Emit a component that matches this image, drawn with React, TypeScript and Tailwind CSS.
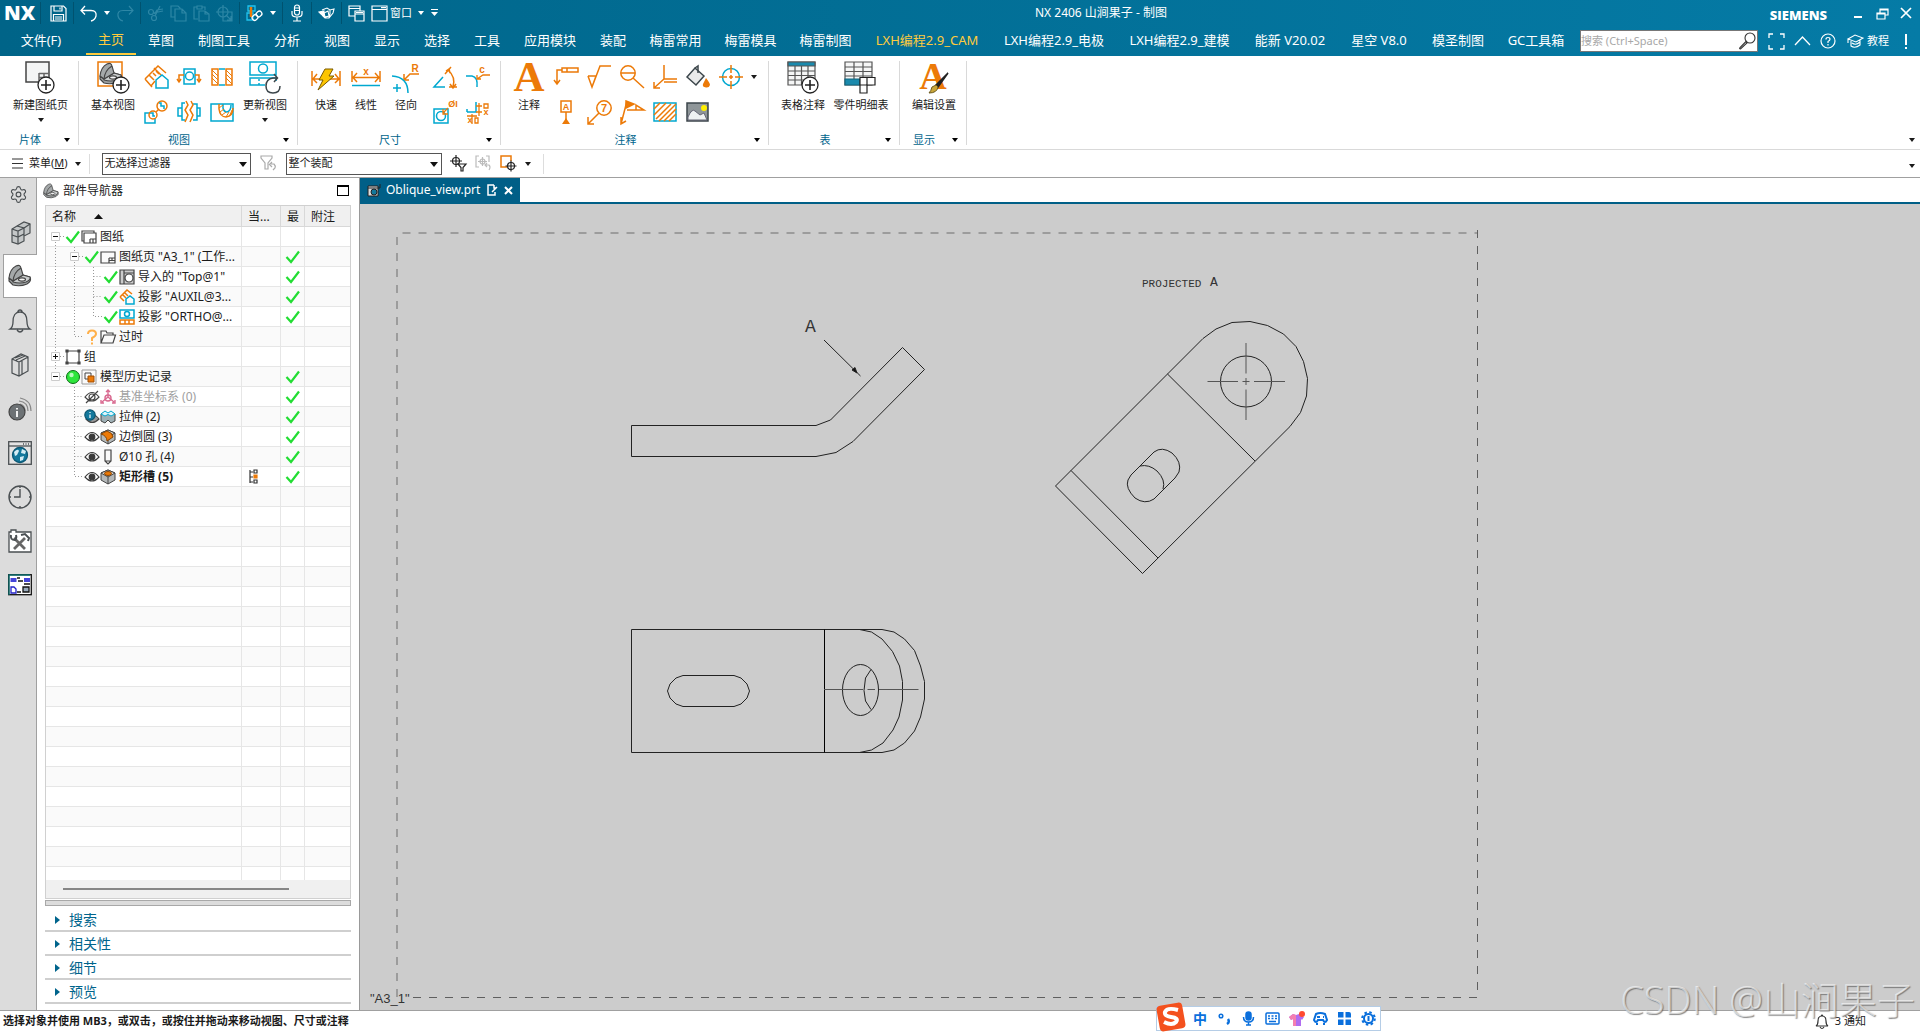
import React from "react";
import { Settings } from "lucide-react";

const O = "#ec7a08";
const B = "#00a8d0";
const K = "#3c464b";

type IconProps = { s?: number; w?: number; h?: number; c?: string; sw?: number; children: React.ReactNode };
function Icon({ s = 24, w, h, c = O, sw = 1.5, children }: IconProps) {
  const W = w ?? s;
  const H = h ?? s;
  return (
    <svg width={W} height={H} viewBox={`0 0 ${W} ${H}`} fill="none" stroke={c} strokeWidth={sw} className="block shrink-0 overflow-visible" aria-hidden="true">
      {children}
    </svg>
  );
}

function Letter({ x, y, size, c = O, font = "Liberation Sans", children }: { x: number; y: number; size: number; c?: string; font?: string; children: string }) {
  return (
    <text x={x} y={y} textAnchor="middle" fontFamily={font} fontWeight="bold" fontSize={size} fill={c} stroke="none">
      {children}
    </text>
  );
}

const Caret = ({ className = "" }: { className?: string }) => (
  <svg width="6" height="4" viewBox="0 0 6 4" className={"shrink-0 " + className} aria-hidden="true">
    <path d="M0 0H6L3 4Z" fill="currentColor" />
  </svg>
);

/* ---------- title bar ---------- */

const Sep = () => <span className="mx-[6px] h-[22px] w-px shrink-0 bg-[#00526f]" />;

function TitleBar() {
  return (
    <div className="relative flex h-[26px] items-center pr-2 pl-1 text-white">
      <span className="w-[36px] font-['Open_Sans'] text-[20px] leading-5 font-extrabold">NX</span>
      <span className="mr-[9px] h-[22px] w-px bg-[#00526f]" />
      <button aria-label="保存">
        <Icon s={17} c="#fff" sw={1.2}>
          <path d="M1 1H13.500L16 3.500V16H1ZM4 1V6H12V1M3.500 16V9.500H13.500V16M5 12H12M5 14H12M10 2.500V4.500" />
        </Icon>
      </button>
      <Sep />
      <button aria-label="撤销">
        <Icon s={17} c="#fff" sw={1.3}>
          <path d="M5 1L1 5.500L5 9.500M1 5.500H11C15.500 5.500 16.500 8 16 11Q15 15 11 16" />
        </Icon>
      </button>
      <Caret className="mx-[7px]" />
      <button aria-label="重做">
        <Icon s={17} c="#2d87a6" sw={1.2}>
          <path d="M12 1L16 5.500L12 9.500M16 5.500H6C1.500 5.500 .5 8 1 11Q2 15 6 16" />
        </Icon>
      </button>
      <Sep />
      <div className="flex gap-[6px]">
        <button aria-label="剪切">
          <Icon s={17} c="#2d87a6" sw={1.2}>
            <circle cx="4" cy="7" r="2.5" /><circle cx="7" cy="13" r="2.500" /><path d="M6 8L16 6M8 11L13 1M7.500 9L10 5L16 4" />
          </Icon>
        </button>
        <button aria-label="复制">
          <Icon s={17} c="#2d87a6" sw={1.2}>
            <path d="M5 12H1V1H8L10 3V4M5 4H12L16 8V16H5ZM12 4V8H16" />
          </Icon>
        </button>
        <button aria-label="粘贴">
          <Icon s={17} c="#2d87a6" sw={1.2}>
            <path d="M5 14H1V2H4M9 2H12V5M4 1H9V4H4ZM6 6H12L16 9V16H6ZM12 6V9H16" />
          </Icon>
        </button>
        <button aria-label="移动">
          <Icon s={17} c="#2d87a6" sw={1.2}>
            <circle cx="7" cy="7" r="5" /><path d="M7 0V10M0 7H10M7 7H16V16H7ZM10 10L15 15M15 11V15H11" />
          </Icon>
        </button>
      </div>
      <Sep />
      <button aria-label="装配约束">
        <Icon s={17} c="#20c4ee" sw={1.3}>
          <path d="M2 1H9V6H2ZM1 8H7V15H1Z" /><path d="M5 2V12" stroke={O} strokeWidth="2.500" />
          <rect x="6" y="10" width="6" height="5" rx="2.500" transform="rotate(-40 9 12.500)" stroke="#fff" />
          <rect x="10" y="6.500" width="6" height="5" rx="2.500" transform="rotate(-40 13 9)" stroke="#fff" />
        </Icon>
      </button>
      <Caret className="ml-[7px]" />
      <Sep />
      <button aria-label="语音" className="px-[1px]">
        <Icon w={14} h={18} c="#fff" sw={1.2}>
          <rect x="4.500" y="1" width="5" height="10" rx="2.500" /><path d="M5 4H9M5 6.500H9M2 7V10Q2 13 7 13Q12 13 12 10V7M7 13V17M3 17H11" />
        </Icon>
      </button>
      <Sep />
      <button aria-label="触控">
        <Icon s={17} c="#fff" sw={1.1}>
          <path d="M4 5L9 3L12 5L16 4L15 8L11 13L7 13L4 10M6 8L10 6L11 11L7 12ZM12 5V9L11 13" /><path d="M1 7L6 6L6 11L3 9Z" fill="#fff" />
        </Icon>
      </button>
      <Sep />
      <button aria-label="切换窗口" className="mr-[6px]">
        <Icon s={17} c="#fff" sw={1.2}>
          <path d="M7 11H1V1H12V6M1 3.500H12M7 6H16V16H7ZM7 9H16M8 7.500H15" />
        </Icon>
      </button>
      <button className="flex items-center gap-[2px] text-[11px]">
        <Icon s={17} c="#fff" sw={1.2}>
          <path d="M1 1H16V16H1ZM1 4.500H16M10 2.700H15" />
        </Icon>
        窗口
      </button>
      <Caret className="ml-[6px]" />
      <svg width="7" height="8" viewBox="0 0 7 8" className="ml-[7px]" aria-hidden="true"><path d="M0 0H7V1H0ZM0 3H7L3.500 7Z" fill="#fff" /></svg>
      <h1 className="absolute left-[1035px] text-[12px] whitespace-nowrap">NX 2406 山涧果子 - 制图</h1>
      <div className="ml-auto flex items-center">
        <span className="mr-[26px] pt-[3px] font-['Open_Sans'] text-[13px] leading-4 font-extrabold">SIEMENS</span>
        <button aria-label="最小化" className="mr-[13px]"><Icon s={10} c="#fff" sw={2}><path d="M1 9H9" /></Icon></button>
        <button aria-label="还原" className="mr-[11px]"><Icon s={13} c="#fff" sw={1.2}><path d="M1 6H9V12H1ZM1 7H9M4 6V2H12V8H9M4 3H12" /></Icon></button>
        <button aria-label="关闭"><Icon s={12} c="#fff" sw={1.700}><path d="M1 1L11 11M11 1L1 11" /></Icon></button>
      </div>
    </div>
  );
}

const TABS: { t: string; hi?: boolean; w: string }[] = [
  { t: "草图", w: "w-[50px]" }, { t: "制图工具", w: "w-[76px]" }, { t: "分析", w: "w-[50px]" }, { t: "视图", w: "w-[50px]" },
  { t: "显示", w: "w-[50px]" }, { t: "选择", w: "w-[50px]" }, { t: "工具", w: "w-[50px]" }, { t: "应用模块", w: "w-[76px]" },
  { t: "装配", w: "w-[50px]" }, { t: "梅雷常用", w: "w-[75px]" }, { t: "梅雷模具", w: "w-[75px]" }, { t: "梅雷制图", w: "w-[75px]" },
  { t: "LXH编程2.9_CAM", hi: true, w: "w-[128px]" }, { t: "LXH编程2.9_电极", w: "w-[126px]" }, { t: "LXH编程2.9_建模", w: "w-[125px]" },
  { t: "能新 V20.02", w: "w-[96px]" }, { t: "星空 V8.0", w: "w-[82px]" }, { t: "模圣制图", w: "w-[76px]" }, { t: "GC工具箱", w: "w-[80px]" },
];

function TabBar() {
  return (
    <div className="flex h-[30px] items-center text-[13px] text-white">
      <button className="w-[86px] pr-1 text-center">文件(F)</button>
      <button className="h-[28px] w-[50px] border-b-2 border-[#ffcb3d] text-[#ffcb3d]">主页</button>
      {TABS.map((x) => (
        <button key={x.t} className={`${x.w} shrink-0 text-center whitespace-nowrap ${x.hi ? "text-[#ffcb3d]" : ""}`}>{x.t}</button>
      ))}
      <label className="ml-1 flex h-[22px] w-[178px] shrink-0 items-center border border-[#777] bg-white text-[#333]">
        <input aria-label="搜索" placeholder="搜索 (Ctrl+Space)" className="w-[157px] bg-transparent text-[11px] outline-none placeholder:text-[#a8a8a8]" />
        <Icon w={18} h={18} c="#333" sw={1.1}><circle cx="12" cy="6" r="5" /><path d="M8.500 9L7.500 10M8 9.500L2 15.500Q1 17 2.500 17L9 11Z" /></Icon>
      </label>
      <div className="ml-auto flex items-center pr-[11px]">
        <button aria-label="全屏"><Icon s={17} c="#fff" sw={1.300}><path d="M1 5V1H5M12 1H16V5M16 12V16H12M5 16H1V12" /></Icon></button>
        <button aria-label="折叠" className="ml-[9px]"><Icon w={17} h={12} c="#fff" sw={1.300}><path d="M1 10L8.500 2L16 10" /></Icon></button>
        <button aria-label="帮助" className="ml-[9px]"><Icon s={16} c="#fff" sw={1.2}><circle cx="8" cy="8" r="7" /><path d="M6 6.500Q6 4.500 8 4.500Q10 4.500 10 6.300Q10 7.500 8 8.500V10M8 11V12.500" /></Icon></button>
        <button className="ml-[11px] flex items-center gap-[3px] text-[11px] whitespace-nowrap">
          <Icon w={17} h={14} c="#fff" sw={1.1}><path d="M1 5L8 1L16 4L9 8ZM4 7V12Q8 15 13 11V6M5 9Q9 12 13 8M1 5V9" /></Icon>
          教程
        </button>
        <button aria-label="提示" className="ml-[14px]"><Icon w={6} h={17} c="#fff" sw={2}><path d="M3 1V12M3 14V16" /></Icon></button>
      </div>
    </div>
  );
}

/* ---------- ribbon ---------- */

function Big({ label, w, menu, children }: { label: string; w: string; menu?: boolean; children: React.ReactNode }) {
  return (
    <button className={`flex ${w} flex-col items-center text-[11px] leading-4 whitespace-nowrap`}>
      {children}
      <span className="mt-[3px]">{label}</span>
      {menu && <Caret className="mt-[5px]" />}
    </button>
  );
}

function Group({ label, w, children }: { label: string; w: string; children: React.ReactNode }) {
  return (
    <section className={`flex h-[84px] ${w} shrink-0 flex-col justify-between border-r border-[#d9d9d9]`}>
      <div className="flex items-start">{children}</div>
      <div className="flex h-[10px] items-center text-[11px] text-[#00648c]">
        <span className="flex-1 text-center">{label}</span>
        <Caret className="mr-2 ml-1 text-black" />
      </div>
    </section>
  );
}

const Grid = ({ className, children }: { className: string; children: React.ReactNode }) => (
  <div className={`mt-1 grid grid-flow-col grid-rows-2 gap-x-[9px] gap-y-[11px] ${className}`}>
    {React.Children.map(children, (c) => <button aria-label="命令">{c}</button>)}
  </div>
);

const Plus = ({ x, y }: { x: number; y: number }) => (
  <g stroke="#222" strokeWidth="1.300"><circle cx={x} cy={y} r="8" fill="#fff" /><path d={`M${x - 5} ${y}H${x + 5}M${x} ${y - 5}V${y + 5}`} strokeWidth="1.600" /></g>
);

const Bracket = () => (
  <g stroke="#444" strokeWidth="1.100" strokeLinejoin="round">
    <path d="M1 14L5 17L15 11L22 13Q24 17 19 20Q12 23 5 21L1 17Z" fill="#9b9fa0" />
    <path d="M5 17L15 11L22 13Q23 16 18 18Q12 20 5 18Z" fill="#c9cccc" />
    <path d="M1 14Q2 5 8 2Q12 0 13 4L15 11L5 17Z" fill="#a4a8a9" />
    <path d="M5 17Q6 8 13 4" fill="none" />
    <ellipse cx="14" cy="15.500" rx="3.500" ry="1.600" fill="#f4f4f4" />
  </g>
);

function Ribbon() {
  return (
    <div className="flex h-[94px] border-b border-[#d9d9d9] pt-[5px]">
      <Group label="片体" w="w-[79px]">
        <Big label="新建图纸页" w="ml-[3px] w-[76px]" menu>
          <Icon w={34} h={33} c={K}>
            <rect x="2" y="1" width="23" height="20" fill="#f4f5f5" stroke="#444" />
            <path d="M15 12.500H25M15 16.500H25M15 12V21M20 12V16" stroke="#666" />
            <Plus x={22} y={24} />
          </Icon>
        </Big>
      </Group>
      <Group label="视图" w="w-[219px]">
        <Big label="基本视图" w="ml-3 w-[44px]">
          <Icon w={32} h={33}>
            <rect x="1" y="1" width="24" height="24" fill="#fff" /><g transform="translate(2 1)"><Bracket /></g><Plus x={24} y={24} />
          </Icon>
        </Big>
        <Grid className="ml-[9px]">
          <Icon><path d="M1 14L14 1L22 8M1 14L8 22M5 10L10 15M9 8L12 11M12 6L15 9M10 3L17 10M7 21L11 16" /><path d="M12 15L18 10L24 15V23H12Z" stroke={B} /></Icon>
          <Icon c={B}><path d="M11 18V23H1V13H7" /><circle cx="18" cy="6" r="5" stroke={O} /><path d="M15 3H17V6H20V9" /><circle cx="9" cy="15" r="4" stroke={O} /><path d="M7 13H9V16H11" /><path d="M12 12L15 9" stroke={O} /></Icon>
          <Icon c={B}><path d="M7 4H18V19H7Z" /><circle cx="12.500" cy="11" r="4" /><path d="M7 10H2V16M18 10H22V16" stroke={O} /><path d="M0 14L2 17L4 14M20 14L22 17L24 14" stroke={O} /></Icon>
          <Icon c={B}><path d="M8 3H5V20H8M5 8H1V16H5M16 4H20V20H16M20 8H23V16H20" /><path d="M9 1L11 5L8 10L11 15L8 22M14 1L16 5L13 10L16 15L13 22" stroke={O} /></Icon>
          <Icon><path d="M2 4H8V20H2ZM16 4H22V20H16Z" /><path d="M2 5L8 11M2 9L8 15M2 13L8 19M16 5L22 11M16 9L22 15M16 13L22 19" strokeWidth="1" /><path d="M9 4H15M9 20H15" stroke={B} /></Icon>
          <Icon c={B}><path d="M1 4H23V21H1Z" /><path d="M9 4V9Q10 17 16 17Q23 16 23 8" stroke={O} /><path d="M13 4V8Q14 12 17 12Q21 11 21 5" /><path d="M9 8L13 5M10 12L14 9M12 15L16 12M16 17L19 12M20 15L22 10" stroke={O} strokeWidth="1" /></Icon>
        </Grid>
        <Big label="更新视图" w="ml-[9px] w-[44px]" menu>
          <Icon w={32} h={33} c={B}>
            <rect x="1" y="1" width="26" height="13" /><circle cx="14" cy="7.500" r="4.500" /><path d="M16 24H1V17H27V20" /><path d="M10 18V24" strokeDasharray="2 2" />
            <path d="M28 17H24Q17 18 17 25Q17 32 24 32Q31 32 31 25M25 13L28.500 17L25 21" stroke={K} />
          </Icon>
        </Big>
      </Group>
      <Group label="尺寸" w="w-[203px]">
        <Big label="快速" w="ml-2 w-[40px]">
          <Icon w={30} h={33}>
            <path d="M1 10V25M29 10V25M2 18H28M6 13L2 18L6 22M24 13L28 18L24 22" />
            <path d="M14 8H22L18 15H23L7 29L12 19H8Z" fill="#fdc500" stroke="#7a5a00" strokeWidth="1" />
          </Icon>
        </Big>
        <Big label="线性" w="w-[40px]">
          <Icon w={30} h={33}>
            <path d="M1 10V21M29 10V21M2 16.500H28M6 12L2 16.500L6 21M24 12L28 16.500L24 21" /><Letter x={15} y={14} size={10}>x</Letter><path d="M1 24.500H29" stroke={B} />
          </Icon>
        </Big>
        <Big label="径向" w="w-[40px]">
          <Icon w={30} h={33}>
            <Letter x={24} y={11} size={10}>R</Letter><path d="M28 13H19L14 18M13 13V19H18" /><path d="M1 15Q17 16 17 32M2 27H10M6 23V31" stroke={B} />
          </Icon>
        </Big>
        <Grid className="ml-[7px]">
          <Icon><path d="M12 22H1L10 12" stroke={B} /><path d="M12 9L18 2M15 5Q23 12 20 22M13 6L16 4L17 8M17 19L20 23L23 19M16 22H24" /></Icon>
          <Icon c={B}><path d="M1 9H15V23H1Z" /><circle cx="8" cy="16" r="4.500" /><path d="M15 8L10 13M10 9V14H15" stroke={O} strokeWidth="1.300" /><Letter x={20} y={7} size={9}>ØI</Letter></Icon>
          <Icon c={B}><path d="M0 11H6Q12 12 11 22" /><path d="M24 10H17L11 14M11 10V14H15" stroke={O} strokeWidth="1.300" /><Letter x={16} y={8} size={10}>c</Letter></Icon>
          <Icon c={B}><path d="M1 12H10V2M1 12V9" /><path d="M10 6H16M10 12H16M13 3V16M6 14V24M1 16H11M18 4V8H22V4ZM9 18V23H12V18Z" stroke={O} strokeWidth="1.300" /><Letter x={20} y={15} size={9}>x</Letter><Letter x={4} y={23} size={9}>x</Letter></Icon>
        </Grid>
      </Group>
      <Group label="注释" w="w-[268px]">
        <Big label="注释" w="ml-2 w-[40px]">
          <Icon w={34} h={33}><Letter x={17} y={30} size={43} font="Liberation Serif">A</Letter></Icon>
        </Big>
        <Grid className="ml-[5px]">
          <Icon><path d="M24 3H8V7H24ZM13 3V7M8 5H3V19M0 15L3 19L6 15" /></Icon>
          <Icon><path d="M7 1H17V12H7ZM12 12V23" /><Letter x={12} y={10} size={9}>A</Letter><path d="M8 24L12 18L16 24Z" fill={O} stroke="none" /></Icon>
          <Icon><path d="M1 11H9L5 22L1 11M5 22L13 1H24" /></Icon>
          <Icon><circle cx="17" cy="8" r="7.200" /><Letter x={17} y={12} size={11}>7</Letter><path d="M12 13L1 24M1 17V24H7" /></Icon>
          <Icon><circle cx="8" cy="8" r="7.200" /><path d="M1 8H15M13 13L24 23" /></Icon>
          <Icon><path d="M1 24L7 1M7 10H24L16 5V10M1 17V24L6 21" /><path d="M6 1L14 4L6 8Z" fill={O} /></Icon>
          <Icon><path d="M11 0V14H24M11 14L1 23M1 17V23H7M11 17H24" /></Icon>
          <Icon c={B}><path d="M1 3H23V21H1Z" /><path d="M1 9L7 3M1 15L13 3M3 19L18 4M6 21L23 4M11 21L23 9M16 21L23 14" stroke={O} /></Icon>
          <Icon c={K}><path d="M1 12L9 3L18 11L10 20Z" fill="#e9eaea" /><path d="M9 3L12 1V8" /><path d="M20 13Q24 18 24 20Q23 23 20 22.500Q16 22 17 19Z" fill="#ec7a08" stroke="none" /></Icon>
          <Icon c={K}><path d="M1 3H22V21H1Z" fill="#8f9699" /><circle cx="18" cy="8" r="3" fill="#ffef00" stroke="none" /><path d="M2 17Q6 8 9 11L14 15L18 13L21 20H2Z" fill="#eef1f2" stroke="#667" strokeWidth="1" /></Icon>
          <Icon c={B}><circle cx="12" cy="12" r="8.500" /><path d="M12 0V8M12 10V14M12 16V24M0 12H8M10 12H14M16 12H24" stroke={O} /></Icon>
        </Grid>
        <span className="mt-[14px] ml-2"><Caret /></span>
      </Group>
      <Group label="表" w="w-[131px]">
        <Big label="表格注释" w="ml-3 w-[44px]">
          <Icon w={34} h={33} c="#555" sw={1.2}>
            <path d="M2 1H29V24H2Z" fill="#f5f6f6" /><path d="M2 1H29V5H2Z" fill="#1a8aad" /><path d="M2 10H29M2 14.500H29M2 19H29M9 5V24M15.500 5V24M22 5V24" /><Plus x={24} y={24} />
          </Icon>
        </Big>
        <Big label="零件明细表" w="ml-2 w-[56px]">
          <Icon w={34} h={33} c="#555" sw={1.2}>
            <path d="M1 1H28V24H1Z" fill="#f5f6f6" /><path d="M1 6H28M1 10.500H28M1 15H28M10 1V24M19 1V24" /><path d="M1 18H16V24H1Z" fill="#1a8aad" stroke="#15677f" /><path d="M16 16.500H31V24H23V32H16Z" fill="#fff" stroke="#222" /><path d="M23 16.500V24H16" stroke="#222" />
          </Icon>
        </Big>
      </Group>
      <Group label="显示" w="w-[67px]">
        <Big label="编辑设置" w="ml-3 w-[44px]">
          <Icon w={34} h={33}>
            <Letter x={16} y={28} size={38} font="Liberation Serif">A</Letter>
            <path d="M31 12L19 24L21 26Z" fill="#222" stroke="#222" /><path d="M19 24L21 26Q20 32 12 32Q14 30 15 26Z" fill="#c9a63a" stroke="#6b5a1e" strokeWidth="1" />
          </Icon>
        </Big>
      </Group>
      <span className="mt-[77px] mr-[5px] ml-auto"><Caret /></span>
    </div>
  );
}

function Combo({ value, w, label }: { value: string; w: string; label: string }) {
  return (
    <div className={`relative ${w}`}>
      <select aria-label={label} className="h-[22px] w-full appearance-none border border-[#555] bg-white pl-[2px] text-[11px] outline-none">
        <option>{value}</option>
      </select>
      <svg width="8" height="5" viewBox="0 0 8 5" className="pointer-events-none absolute top-[9px] right-1" aria-hidden="true"><path d="M0 0H8L4 5Z" fill="#111" /></svg>
    </div>
  );
}

function SelectionBar() {
  return (
    <div className="flex h-[28px] items-center border-b border-[#a0a0a0] pr-[5px] pl-3 text-[11px]">
      <button className="flex items-center">
        <Icon w={11} h={11} c="#333" sw={1.2}><path d="M0 1H11M0 5.500H11M0 10H11" /></Icon>
        <span className="ml-[6px]">菜单(<u>M</u>)</span>
        <Caret className="ml-[7px]" />
      </button>
      <span className="mr-3 ml-2 h-[20px] w-px bg-[#ddd]" />
      <Combo label="选择过滤器" value="无选择过滤器" w="w-[149px]" />
      <button aria-label="重置过滤器" className="mx-[9px]"><Icon s={17} c="#aaa" sw={1.2}><path d="M1 1H12V3L8 8V14H5V8L1 3ZM10 9H14Q16 11 15 13L13 15M12 7L9.500 9.500L12 12" /></Icon></button>
      <Combo label="选择范围" value="整个装配" w="w-[156px]" />
      <button aria-label="点过滤" className="ml-2"><Icon s={17} c="#222" sw={1.2}><circle cx="6" cy="6" r="3.500" /><path d="M6 0V12M0 6H12" /><path d="M8 9H16L13 12.500V16H11V12.500Z" fill="#fff" /></Icon></button>
      <button aria-label="范围选择" className="ml-2"><Icon s={17} c="#bbb" sw={1.2}><path d="M4 1H1V12H4M11 1H14V7" /><circle cx="7.500" cy="6.500" r="2.500" /><path d="M7.500 2V11M3 6.500H12M10 10H14Q16 12 14 15M12 8L10 10L12 12" /></Icon></button>
      <button aria-label="捕捉" className="ml-2"><Icon s={17} c={O} sw={1.500}><path d="M7 12H1V1H11V6" /><g stroke="#222" strokeWidth="1.200"><circle cx="11" cy="11" r="3.500" /><path d="M11 5.500V16.500M5.500 11H16.500" /></g></Icon></button>
      <Caret className="ml-2" />
      <span className="ml-3 h-[20px] w-px bg-[#ddd]" />
      <span className="mt-1 ml-auto"><Caret /></span>
    </div>
  );
}

/* ---------- resource bar ---------- */

const G = "#4a4f52";
const RAIL: { label: string; icon: React.ReactNode; on?: boolean }[] = [
  { label: "设置", icon: <Settings size={19} strokeWidth={1.4} color={G} /> },
  { label: "装配导航器", icon: <Icon s={24} c={G} sw={1.200}><path d="M9 5L16 1L22 3V12L16 15V20L10 23L4 21V8L9 5Z" fill="#c4c7c8" /><path d="M4 8L10 10L16 7L9 5M10 10V23M16 7L22 3M16 7V15M4 14L10 16L16 13" /></Icon> },
  { label: "部件导航器", on: true, icon: <Icon s={24} c={G}><Bracket /></Icon> },
  { label: "通知", icon: <Icon s={24} c={G} sw={1.300}><path d="M10 3Q10 1 12 1Q14 1 14 3M2 20Q5 18 5 13Q5 3 12 3Q19 3 19 13Q19 18 22 20ZM9 21Q12 25 15 21" /></Icon> },
  { label: "重用库", icon: <Icon s={24} c={G} sw={1.200}><path d="M4 6L13 1L20 4V18L11 23L4 20ZM4 6L11 9L20 4M11 9V23M7 5L15 2M8 7L17 3M14 8V21" /></Icon> },
  { label: "信息", icon: <Icon s={24} c="#888" sw={1.200}><path d="M11 4Q20 5 20 14M12 1Q23 3 23 14M12 7Q17 8 17 14" /><circle cx="9" cy="15" r="8" fill="#6d7275" stroke="#444" /><path d="M9 11V12.500M9 14V20" stroke="#fff" strokeWidth="1.800" /></Icon> },
  { label: "浏览器", icon: <Icon s={24} c={G} sw={1.300}><rect x=".7" y=".7" width="22.600" height="22.600" fill="#e4e4e4" /><path d="M1 5H23" /><path d="M15 3H21" strokeDasharray="1 1.500" /><circle cx="12" cy="14" r="7.500" fill="#13789c" stroke="#0c5875" /><path d="M6 11Q10 7 11 10L9 14L7 15ZM14 8L18 10L17 13L13 12ZM12 16L16 15L15 19L12 20Z" fill="#d5edf5" stroke="none" /></Icon> },
  { label: "历史", icon: <Icon s={24} c={G} sw={1.400}><circle cx="12" cy="12" r="11" /><path d="M12 4V12H6M12 1V3M12 21V23M1 12H3M21 12H23" /></Icon> },
  { label: "工具", icon: <Icon s={24} c={G} sw={1.300}><path d="M1 3H3V1H8V3H23V23H1Z" fill="#fff" /><path d="M6 9L17 20M17 9L6 20" strokeWidth="2.800" stroke="#666" /><path d="M3 6Q2 11 7 11Q9 9 8 6M13 6L17 5L21 9L20 12" strokeWidth="2" /></Icon> },
  { label: "流程", icon: <Icon w={24} h={22} c="#111" sw={1.300}><rect x=".7" y=".7" width="22.600" height="20" fill="#fff" /><path d="M1 21V1H22" stroke="#0c7070" /><path d="M2.500 4H8.500V8H2.500ZM16 4H22V8H16Z" fill="#4444d8" stroke="none" /><path d="M9 4H12M10 7H15M9 18H13M16 10H22" /><path d="M3 13H6L8 15V19H3Z" stroke="#2222c8" /><path d="M15 13H21V18H15Z" fill="#9ab" /></Icon> },
];

function Rail() {
  return (
    <nav className="flex w-[37px] shrink-0 flex-col border-r border-[#a0a0a0] bg-[#dcdcdc]">
      {RAIL.map((r, i) => (
        <button key={r.label} aria-label={r.label} className={`flex shrink-0 items-center justify-center ${i === 0 ? "h-[32px]" : "h-[44px]"} ${r.on ? "-mr-px ml-[3px] border-y border-l border-[#a0a0a0] bg-white pr-[2px]" : i === 0 ? "" : "pt-[2px] pl-[3px]"}`}>
          {r.icon}
        </button>
      ))}
    </nav>
  );
}

/* ---------- part navigator ---------- */

const Check = () => <Icon w={16} h={14} c="#22dd33" sw={2.200}><path d="M1.500 7L6 12L14 1.500" /></Icon>;
const Eye = () => <Icon w={16} h={14} c="#3a3a3a" sw={1.200}><path d="M1 7Q8 -2 15 7Q8 15 1 7Z" /><circle cx="8" cy="7" r="2.800" fill="#3a3a3a" /></Icon>;
const Cube = ({ top, children }: { top: string; children?: React.ReactNode }) => (
  <Icon s={16} c="#444" sw={1}><path d="M8 1L15 4V11L8 15L1 11V4Z" fill="#b4b8b9" /><path d="M8 1L15 4L8 8L1 4Z" fill={top} /><path d="M8 8V15" />{children}</Icon>
);

type Row = { lv: string; ex?: string; a?: React.ReactNode; b: React.ReactNode; t: string; ok?: boolean; cls?: string; cur?: boolean };
const ROWS: Row[] = [
  { lv: "pl-0", ex: "−", a: <Check />, b: <Icon s={16} c="#444" sw={1.200}><path d="M3 12H1V2H13V4M3 4H15V14H3ZM9 10H15M9 10V14M12 10V14" /></Icon>, t: "图纸" },
  { lv: "pl-[19px]", ex: "−", a: <Check />, b: <Icon s={16} c="#444" sw={1.200}><path d="M1 3H15V14H1ZM9 9H15M9 11.500H15M9 9V14M12 9V11" /></Icon>, t: '图纸页 "A3_1" (工作...', ok: true },
  { lv: "pl-[38px]", a: <Check />, b: <Icon s={16} c="#444" sw={1.200}><path d="M1 1H15V15H1Z" fill="#ccc" /><path d="M5 1V15M5 4H15" /><circle cx="10" cy="9" r="4" fill="#fff" /></Icon>, t: '导入的 "Top@1"', ok: true },
  { lv: "pl-[38px]", a: <Check />, b: <Icon s={16}><path d="M1 8L8 1L13 5M1 8L5 12M4 6L7 9M6 4L9 7" /><path d="M7 10L11 7L15 10V15H7Z" stroke={B} /></Icon>, t: '投影 "AUXIL@3...', ok: true },
  { lv: "pl-[38px]", a: <Check />, b: <Icon s={16} c={B}><path d="M1 1H15V9H1Z" /><circle cx="8" cy="5" r="2.500" /><path d="M1 11H15V15H1ZM6 11V15M10 11V15" stroke={O} /></Icon>, t: '投影 "ORTHO@...', ok: true },
  { lv: "pl-[19px]", a: <Icon s={16} c="#ffb04a" sw={2}><path d="M4 5Q4 1.500 8 1.500Q12 1.500 12 5Q12 7 8 9V12M8 13.500V15.500" /></Icon>, b: <Icon s={16} c="#444" sw={1.200}><path d="M1 14V2H6L7 4H13V6M1 14L4 6H15.500L13 14Z" /></Icon>, t: "过时" },
  { lv: "pl-0", ex: "+", b: <Icon s={16} c="#444" sw={1.200}><path d="M2 2H14V14H2Z" /><path d="M1 1H3V3H1ZM13 1H15V3H13ZM1 13H3V15H1ZM13 13H15V15H13Z" fill="#444" /></Icon>, t: "组" },
  { lv: "pl-0", ex: "−", a: <Icon s={16} c="#0c6b16" sw={1}><circle cx="8" cy="8" r="6.500" fill="#2ee53c" /><circle cx="6.500" cy="6" r="2.200" fill="#b9f8bd" stroke="none" /></Icon>, b: <Icon s={16} c="#999" sw={1}><path d="M1 1H15V15H1Z" /><path d="M4 4H10V10H4Z" stroke="#444" /><path d="M7 7H13V13H7Z" fill={O} stroke="#a04d00" /></Icon>, t: "模型历史记录", ok: true },
  { lv: "pl-[19px]", a: <Icon w={16} h={14} c="#444" sw={1.200}><path d="M1 7Q8 -2 15 7Q8 15 1 7ZM2 13L14 1" /><circle cx="8" cy="7" r="3" /></Icon>, b: <Icon s={16} c="#d96a90" sw={1.400}><path d="M8 8V1M6 3L8 1L10 3M8 8L2 13M8 8L14 13M1 11V14H4M12 14H15V11" /><circle cx="8" cy="9" r="3" /></Icon>, t: "基准坐标系 (0)", ok: true, cls: "text-[#a0a0a0]" },
  { lv: "pl-[19px]", a: <Icon s={16} c="#444" sw={1.200}><path d="M2 10Q9 2 15 10Q8 17 2 10Z" fill="#999" /><circle cx="6" cy="6" r="5.200" fill="#13789c" stroke="#0b5570" /><path d="M6 3V4M6 5.500V9" stroke="#fff" /></Icon>, b: <Icon s={16} c="#444" sw={1}><path d="M1 5L5 3L8 5L11 3L15 5V12L11 14L8 11L5 14L1 12Z" fill="#9fb0b5" /><path d="M1 5L5 2L8 4L11 2L15 5L11 7L8 5.500L5 7Z" stroke={B} fill="#dff4fa" /></Icon>, t: "拉伸 (2)", ok: true },
  { lv: "pl-[19px]", a: <Eye />, b: <Cube top="#ccc"><path d="M1 5L7 2Q13 4 13 8L7 12Q7 7 1 5Z" fill={O} stroke="#8a4500" /></Cube>, t: "边倒圆 (3)", ok: true },
  { lv: "pl-[19px]", a: <Eye />, b: <Icon s={16} c="#444" sw={1.200}><path d="M5 1H11V12L8 15L5 12ZM5 12H11" /></Icon>, t: "Ø10 孔 (4)", ok: true },
  { lv: "pl-[19px]", a: <Eye />, b: <Cube top="#e0e0e0"><ellipse cx="8" cy="4.500" rx="3.500" ry="2" fill={O} stroke="#8a4500" /></Cube>, t: "矩形槽 (5)", ok: true, cls: "font-bold", cur: true },
];

function Tree() {
  const cell = "h-[20px] border-r border-b border-[#e6e6e6] p-0";
  const head = "h-[21px] border-r border-b border-[#d8d8d8] bg-[#f0f0f0] p-0 text-left font-normal";
  return (
    <div className="relative min-h-0 flex-1 overflow-hidden">
      <table className="w-full table-fixed border-separate border-spacing-0 text-[12px] leading-[19px]">
        <colgroup><col /><col className="w-[39px]" /><col className="w-[24px]" /><col className="w-[45px]" /></colgroup>
        <thead>
          <tr>
            <th className={head}>
              <span className="flex items-center gap-[18px] pl-[6px]">名称<svg width="9" height="5" viewBox="0 0 9 5" aria-hidden="true"><path d="M0 5L4.500 0L9 5Z" fill="#111" /></svg></span>
            </th>
            <th className={`${head} pl-[6px]`}>当...</th>
            <th className={`${head} pl-[6px]`}>最</th>
            <th className={`${head} border-r-0 pl-[6px]`}>附注</th>
          </tr>
        </thead>
        <tbody>
          {Array.from({ length: 33 }, (_, i) => {
            const r = ROWS[i];
            return (
              <tr key={i} className={i % 2 ? "bg-[#fafafa]" : "bg-white"}>
                <td className={cell}>
                  {r && (
                    <div className={`relative z-10 flex h-[19px] items-center overflow-hidden whitespace-nowrap ${r.lv} ${r.cls ?? ""}`}>
                      <span className="flex w-[19px] shrink-0 justify-center">
                        {r.ex && (
                          <button aria-label="展开" className="bg-white">
                            <Icon s={9} c="#111" sw={1}><path d="M.5 .5H8.500V8.500H.5Z" stroke="#ccc" /><path d={r.ex === "+" ? "M2 4.500H7M4.500 2V7" : "M2 4.500H7"} /></Icon>
                          </button>
                        )}
                      </span>
                      {r.a}
                      <span className="mr-[3px]">{r.b}</span>
                      {r.t}
                    </div>
                  )}
                </td>
                <td className={cell}>
                  {r?.cur && <span className="block pl-[7px]"><Icon w={10} h={15} c="#333" sw={1.200}><path d="M1 1V14M1 3H4M1 8H4M1 13H4M5 1H8V4H5ZM5 11H8V14H5Z" /><path d="M5 6H8V9H5Z" fill={O} stroke={O} /></Icon></span>}
                </td>
                <td className={cell}>{r?.ok && <span className="flex justify-center"><Check /></span>}</td>
                <td className={`${cell} border-r-0`} />
              </tr>
            );
          })}
        </tbody>
      </table>
      <svg width="80" height="300" viewBox="0 0 80 300" className="pointer-events-none absolute top-0 left-0" fill="none" stroke="#999" strokeDasharray="1 2" aria-hidden="true">
        <path d="M9.500 36V146M9.500 156V165M14 30.500H18M14 150.500H18M14 170.500H18" />
        <path d="M28.500 41V46M28.500 56V130.500H37M33 50.500H37M47.500 61V110.500H56M47.500 70.500H56M47.500 90.500H56" />
        <path d="M28.500 181V270.500H37M28.500 190.500H37M28.500 210.500H37M28.500 230.500H37M28.500 250.500H37" />
      </svg>
    </div>
  );
}

function Navigator() {
  return (
    <aside className="flex w-[323px] shrink-0 flex-col border-r border-[#999] bg-white px-2 pb-[6px]">
      <header className="flex h-[27px] shrink-0 items-center pr-[2px] pb-[2px] text-[12px]">
        <span className="-ml-[2px]"><Icon s={16} c={G}><g transform="scale(.68)"><Bracket /></g></Icon></span>
        <h2 className="ml-1">部件导航器</h2>
        <button aria-label="最大化" className="ml-auto h-[11px] w-[12px] border border-t-2 border-black" />
      </header>
      <div className="flex min-h-0 flex-1 flex-col border border-[#d0d0d0]">
        <Tree />
        <div className="flex h-[18px] items-center bg-[#f0f0f0] pl-[17px]"><span className="h-[2px] w-[226px] bg-[#868686]" /></div>
      </div>
      <div className="mt-px mb-[2px] h-[6px] shrink-0 border border-[#a8a8a8] bg-[#dcdcdc]" />
      {["搜索", "相关性", "细节", "预览"].map((t) => (
        <button key={t} className="flex h-[24px] shrink-0 items-center gap-[9px] border-b-2 border-[#cfcfcf] pt-[2px] pl-[10px] text-left text-[14px] leading-5 text-[#00648c]">
          <svg width="5" height="8" viewBox="0 0 5 8" aria-hidden="true"><path d="M0 0L5 4L0 8Z" fill="currentColor" /></svg>
          {t}
        </button>
      ))}
    </aside>
  );
}

/* ---------- drawing sheet ---------- */

function Sheet() {
  return (
    <svg viewBox="360 204 1560 806" preserveAspectRatio="xMinYMin slice" className="absolute inset-0 h-full w-full" fill="none" stroke="#222" strokeWidth="1">
      <g stroke="#8c8c8c" strokeDasharray="8 8" strokeWidth="1.500">
        <path d="M402.500 233H1477.500" /><path d="M397 237V997" />
      </g>
      <g stroke="#5f5f5f" strokeDasharray="8 8"><path d="M1477.500 230V997" /><path d="M413 997.500H1477.500" /></g>
      <path d="M631.500 425.500H816L830.500 420L902.500 347.500L924.500 369.500L853 441.500L836 452.500L816 456.500H631.500Z" />
      <path d="M824 340L860.500 376" /><path d="M852 370L855 367.500L857 373Z" fill="#111" />
      <path d="M631.500 629.500H882L894 632L904.500 639L914.500 650.500L920.500 666L924.500 681.500V699L920.500 717L914.500 731L904.500 743L894 750L882 752.500H631.500Z" />
      <path d="M859.500 629.500L871.500 632L882 639L892.500 651.500L899.500 666L902.500 681.500V700L899 717L893 730L883 743L871.500 750L859.500 752.500" />
      <path d="M824.500 629.500V752.500" stroke="#000" />
      <path d="M683 675.500H734L741 678L747 684L749.500 691L747 698L741 704L734 706.500H683L676 704L670 698L667.500 691L670 684L676 678Z" />
      <ellipse cx="860.500" cy="690" rx="18" ry="25.500" />
      <path d="M871 669.500L865.500 678L864 690.500L865.500 701L871 709.500" />
      <path d="M824 689.500H863M867.500 689.500H875M879 689.500H918.500" stroke="#555" />
      <path d="M1055.500 486L1203 338.500L1216 329L1232 322.500L1250 321.500L1267.500 325.500L1283.500 334L1296 346.500L1303.500 361.500L1307.500 378.500L1306.500 396L1300.500 412.500L1290 426.500L1142.500 573.500Z" />
      <path d="M1071 470.500L1158 558M1167.500 374L1255 461" />
      <circle cx="1246" cy="381.500" r="25.500" />
      <path d="M1207.500 381.500H1238M1242.500 381.500H1249.500M1254 381.500H1285M1246 343V373.500M1246 378V385M1246 389.500V420" stroke="#555" />
      <path d="M1131 475L1154 452Q1162 446 1172 453Q1182 462 1179 472L1175 478L1154 499Q1145 505 1135 498Q1125 488 1128 480Z" />
      <path d="M1140 466Q1149 464 1157 471Q1166 480 1163 489" />
      <g stroke="none" fill="#333" fontFamily="Liberation Mono">
        <text x="805" y="332" fontSize="18">A</text>
        <text x="1142" y="287" fontSize="11">PROJECTED</text>
        <text x="1210" y="286" fontSize="13">A</text>
        <text x="370" y="1003" fontSize="13" fontFamily="Liberation Sans">"A3_1"</text>
      </g>
    </svg>
  );
}

function Workspace() {
  return (
    <main className="flex min-w-0 flex-1 flex-col bg-[#cccccc]">
      <div className="flex h-[26px] shrink-0 border-b-2 border-[#005f87] bg-white">
        <div className="flex h-[24px] w-[160px] items-center bg-[#005f87] px-[7px] text-[12px] text-white">
          <Icon s={14} c="#222" sw={1}><path d="M1 3H11V13H1Z" fill="#ddd" /><path d="M1 5H13V1" /><circle cx="7" cy="9" r="3" fill="#13789c" /></Icon>
          <span className="ml-[5px]">Oblique_view.prt</span>
          <span className="ml-auto flex items-center gap-[6px]">
            <Icon w={11} h={12} c="#fff" sw={1.500}><path d="M7 1H1V11H8V8M5 8L10 3M7 1V4H9" /></Icon>
            <button aria-label="关闭标签"><Icon s={9} c="#fff" sw={2}><path d="M1 1L8 8M8 1L1 8" /></Icon></button>
          </span>
        </div>
      </div>
      <div className="relative min-h-0 flex-1 overflow-hidden"><Sheet /></div>
    </main>
  );
}

/* ---------- input method bar ---------- */

const A = "#0a6fdc";
function ImeBar() {
  return (
    <div className="absolute bottom-[1px] left-[1156px] flex h-[25px] w-[225px] items-center gap-[9px] border border-[#b5cde6] bg-white pl-[36px]">
      <svg width="32" height="31" viewBox="0 0 32 31" className="absolute -top-[6px] -left-[2px]" aria-hidden="true">
        <rect x="3" y="3" width="26" height="26" rx="4" fill="#f4511e" transform="rotate(-10 16 16)" />
        <path d="M23 9Q12 6 10 11Q9 15 16 16Q24 17 21 21Q17 25 9 21" fill="none" stroke="#fff" strokeWidth="4" />
      </svg>
      <span className="w-[15px] text-[14px] leading-4 font-bold text-[#0a6fdc]">中</span>
      <Icon s={15} c={A} sw={1.500}><circle cx="4" cy="5" r="1.800" /><path d="M11 8Q13 11 10 13" strokeWidth="2.500" /></Icon>
      <Icon s={15} c={A} sw={1.500}><rect x="5" y="1" width="5" height="8" rx="2.500" fill={A} /><path d="M2.500 6Q2.500 11 7.500 11Q12.500 11 12.500 6M7.500 11V14M5 14H10" /></Icon>
      <Icon s={15} c={A} sw={1.500}><rect x="1" y="2" width="13" height="11" rx="1" /><path d="M3 5H12M3 7.500H12" strokeDasharray="2 1.500" /><path d="M4 10.500H11" /></Icon>
      <Icon s={15} c="none"><path d="M4 3L7 4L10 3L15 6L13 9L12 8V15H4V8L2 9L0 6Z" fill="#b06df0" /><path d="M4 3L7 4V15H4V8L2 9L0 6Z" fill="#f47fb0" /><circle cx="13" cy="3" r="3" fill="#ff4a30" /></Icon>
      <Icon s={15} c={A} sw={2}><path d="M3 3Q7 1 12 3L14 9Q12 13 10 9H5Q3 13 1 9ZM4 6H7M10 6H11M3 13H5M10 13H12" /></Icon>
      <Icon s={15} c="none"><path d="M1 1H6.500V6.500H1ZM8.500 1H12Q14 1 14 3V6.500H8.500ZM1 8.500H6.500V14H1ZM8.500 8.500H14V14H8.500Z" fill={A} /></Icon>
      <Icon s={15} c={A} sw={2}><circle cx="7.500" cy="7.500" r="4.500" /><circle cx="7.500" cy="7.500" r="6.300" strokeDasharray="2.500 2.450" /><path d="M7.500 5V10" /></Icon>
    </div>
  );
}

export default function App() {
  return (
    <div className="relative flex h-screen flex-col overflow-hidden bg-white font-['Noto_Sans','Noto_Sans_CJK_SC',sans-serif] text-[#1a1a1a]">
      <div className="shrink-0 bg-linear-to-r from-[#006488] to-[#057ba6]">
        <TitleBar />
        <TabBar />
      </div>
      <Ribbon />
      <SelectionBar />
      <div className="flex min-h-0 flex-1">
        <Rail />
        <Navigator />
        <Workspace />
      </div>
      <footer className="flex h-[22px] shrink-0 items-center border-t border-[#a0a0a0] pr-[54px] pl-[3px] text-[11px]">
        <span className="font-bold">选择对象并使用 MB3，或双击，或按住并拖动来移动视图、尺寸或注释</span>
        <button className="ml-auto flex items-center gap-[6px]">
          <Icon w={14} h={16} c="#333" sw={1.200}><path d="M6 2Q7 0 8 2M1 12Q3 11 3 7Q3 2 7 2Q11 2 11 7Q11 11 13 12ZM5 13Q7 16 9 13" /></Icon>
          3 通知
        </button>
      </footer>
      <ImeBar />
      <div className="pointer-events-none absolute right-[5px] bottom-2 text-[38px] leading-[50px] font-light whitespace-nowrap text-white/60 [text-shadow:1px_1px_1px_rgba(90,90,90,0.7)]">CSDN @山涧果子</div>
    </div>
  );
}
